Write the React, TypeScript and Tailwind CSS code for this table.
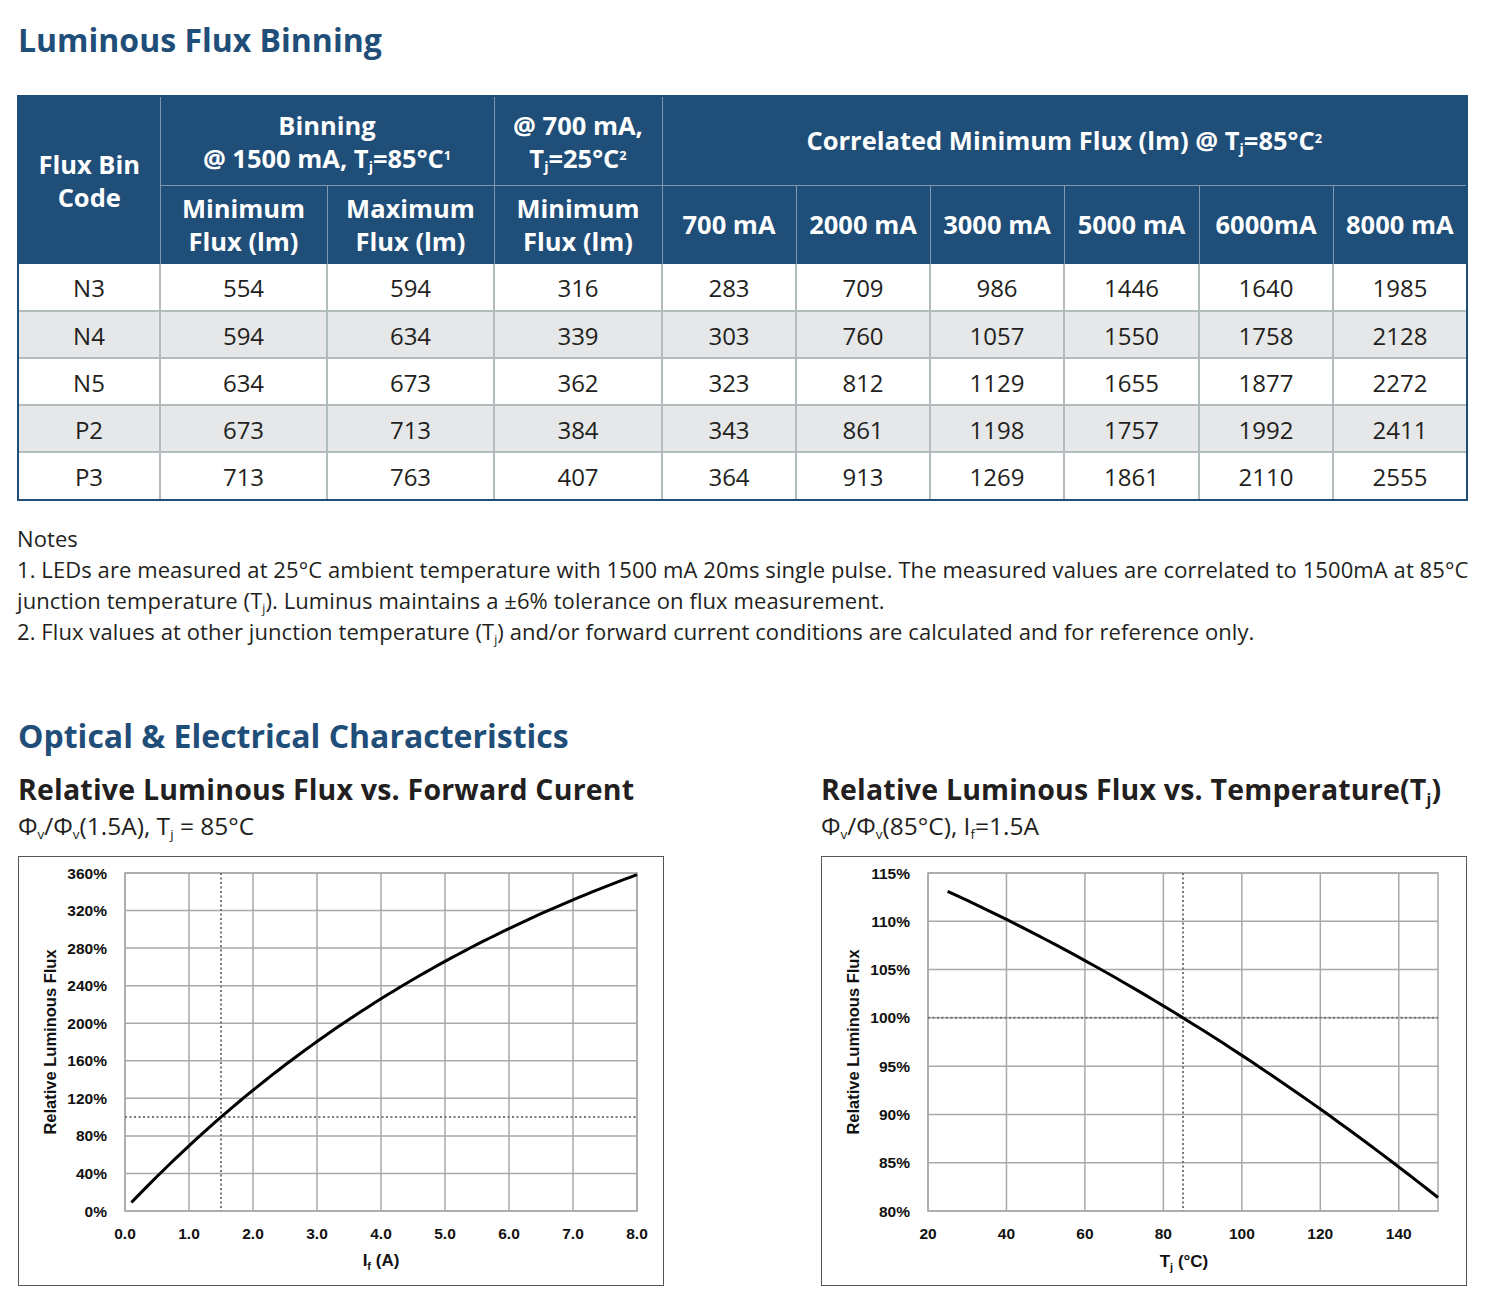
import React from "react";

const Sub = ({ children }: { children: React.ReactNode }) => (
  <span className="relative top-[0.3em] text-[0.55em] leading-none">{children}</span>
);

const Sup = ({ children }: { children: React.ReactNode }) => (
  <span className="relative -top-[0.6em] text-[0.5em] leading-none">{children}</span>
);

const widths = [141, 167, 167, 168, 134, 134, 134, 135, 134, 133];

const rows = [
  ["N3", "554", "594", "316", "283", "709", "986", "1446", "1640", "1985"],
  ["N4", "594", "634", "339", "303", "760", "1057", "1550", "1758", "2128"],
  ["N5", "634", "673", "362", "323", "812", "1129", "1655", "1877", "2272"],
  ["P2", "673", "713", "384", "343", "861", "1198", "1757", "1992", "2411"],
  ["P3", "713", "763", "407", "364", "913", "1269", "1861", "2110", "2555"],
];

const currents = ["700 mA", "2000 mA", "3000 mA", "5000 mA", "6000mA", "8000 mA"];

// flux vs current, fitted to the datasheet curve
const currentData: [number, number][] = [];
for (let x = 0.1; x <= 8.001; x += 0.1) {
  currentData.push([x, 9 + 546.5 * (Math.exp(-0.0132) - Math.exp(-0.132 * x))]);
}

// flux vs junction temperature
const tempData: [number, number][] = [];
for (let t = 25; t <= 150; t += 2.5) {
  const d = t - 85;
  tempData.push([t, 100 - 0.2509 * d - 0.000543 * d * d]);
}

const linePath = (pts: [number, number][]) =>
  pts.map((p, i) => `${i === 0 ? "M" : "L"}${p[0].toFixed(2)},${p[1].toFixed(2)}`).join(" ");

type ChartProps = {
  xMin: number;
  xMax: number;
  xTicks: number[];
  xFmt: (v: number) => string;
  yMin: number;
  yMax: number;
  yTicks: number[];
  right: number;
  data: [number, number][];
  dotX: number;
  dotY: number;
  xLabel: React.ReactNode;
};

const Chart = ({ xMin, xMax, xTicks, xFmt, yMin, yMax, yTicks, right, data, dotX, dotY, xLabel }: ChartProps) => {
  const left = 106;
  const top = 16;
  const bottom = 354;
  const sx = (v: number) => left + ((v - xMin) / (xMax - xMin)) * (right - left);
  const sy = (v: number) => bottom - ((v - yMin) / (yMax - yMin)) * (bottom - top);
  const pts = data.map(([x, y]) => [sx(x), sy(y)] as [number, number]);

  return (
    <div className="w-[646px] h-[430px] border-[1.5px] border-[#555]">
      <svg width="643" height="427" className="block font-['Liberation_Sans',Arial,sans-serif]">
        {yTicks.map((t) => (
          <line key={"h" + t} x1={left} x2={right} y1={sy(t)} y2={sy(t)} stroke="#a9a9a9" strokeWidth="1.5" />
        ))}
        {xTicks.map((t) => (
          <line key={"v" + t} x1={sx(t)} x2={sx(t)} y1={top} y2={bottom} stroke="#a9a9a9" strokeWidth="1.5" />
        ))}
        <rect x={left} y={top} width={right - left} height={bottom - top} fill="none" stroke="#a9a9a9" strokeWidth="1.5" />
        <line x1={sx(dotX)} x2={sx(dotX)} y1={top} y2={bottom} stroke="#777" strokeWidth="2" strokeDasharray="2 2.5" />
        <line x1={left} x2={right} y1={sy(dotY)} y2={sy(dotY)} stroke="#777" strokeWidth="2" strokeDasharray="2 2.5" />
        <path d={linePath(pts)} fill="none" stroke="#000" strokeWidth="3" strokeLinejoin="round" />

        {yTicks.map((t) => (
          <text key={"yl" + t} x={88} y={sy(t)} dy="0.36em" textAnchor="end" fontSize="15.5" fontWeight="700" fill="#111">
            {t}%
          </text>
        ))}
        {xTicks.map((t) => (
          <text key={"xl" + t} x={sx(t)} y={376} dy="0.36em" textAnchor="middle" fontSize="15.5" fontWeight="700" fill="#111">
            {xFmt(t)}
          </text>
        ))}
        <text
          x={31}
          y={185}
          dy="0.36em"
          textAnchor="middle"
          fontSize="16.5"
          fontWeight="700"
          fill="#111"
          transform="rotate(-90 31 185)"
        >
          Relative Luminous Flux
        </text>
        {xLabel}
      </svg>
    </div>
  );
};

export default function App() {
  return (
    <div className="w-[1504px] h-[1309px] bg-white px-[17px] pt-[18px] font-['Open_Sans',sans-serif] text-[#231f20]">
      <h1 className="text-[32px] font-bold leading-[44px] text-[#1f4e79] pl-[1px]">Luminous Flux Binning</h1>

      <div className="mt-[33px] w-[1451px] border-2 border-[#1f4e79]">
        <table className="table-fixed border-collapse w-[1447px]">
          <colgroup>
            {widths.map((w, i) => (
              <col key={i} style={{ width: w }} />
            ))}
          </colgroup>
          <thead className="bg-[#1f4e79] text-white text-[25.5px] font-bold leading-[33px]">
            <tr className="h-[88px]">
              <th rowSpan={2} className="border-r-[1.5px] border-[#7f98b0] font-bold">
                Flux Bin
                <br />
                Code
              </th>
              <th colSpan={2} className="border-r-[1.5px] border-b-[1.5px] border-[#7f98b0] pt-[2px]">
                Binning
                <br />@ 1500 mA, T<Sub>j</Sub>=85°C<Sup>1</Sup>
              </th>
              <th className="border-r-[1.5px] border-b-[1.5px] border-[#7f98b0] pt-[2px]">
                @ 700 mA,
                <br />T<Sub>j</Sub>=25°C<Sup>2</Sup>
              </th>
              <th colSpan={6} className="border-b-[1.5px] border-[#7f98b0]">
                Correlated Minimum Flux (lm) @ T<Sub>j</Sub>=85°C<Sup>2</Sup>
              </th>
            </tr>
            <tr className="h-[79px]">
              {["Minimum", "Maximum", "Minimum"].map((w, i) => (
                <th key={i} className="border-r-[1.5px] border-[#7f98b0]">
                  {w}
                  <br />
                  Flux (lm)
                </th>
              ))}
              {currents.map((c, i) => (
                <th key={c} className={i < 5 ? "border-r-[1.5px] border-[#7f98b0]" : ""}>
                  {c}
                </th>
              ))}
            </tr>
          </thead>
          <tbody className="text-[24px] leading-none">
            {rows.map((r, ri) => (
              <tr key={r[0]} className={`h-[47px] ${ri % 2 === 1 ? "bg-[#e6e7e8]" : "bg-white"}`}>
                {r.map((v, ci) => (
                  <td
                    key={ci}
                    className={`text-center pt-[2px] border-[#b3bcbc] ${ci < 9 ? "border-r-2" : ""} ${
                      ri < 4 ? "border-b-2" : ""
                    }`}
                  >
                    {v}
                  </td>
                ))}
              </tr>
            ))}
          </tbody>
        </table>
      </div>

      <div className="mt-[22px] text-[22px] leading-[31px] whitespace-nowrap tracking-[0.08px]">
        <div>Notes</div>
        <div>
          1. LEDs are measured at 25°C ambient temperature with 1500 mA 20ms single pulse. The measured values are
          correlated to 1500mA at 85°C
        </div>
        <div>
          junction temperature (T<Sub>j</Sub>). Luminus maintains a ±6% tolerance on flux measurement.
        </div>
        <div>
          2. Flux values at other junction temperature (T<Sub>j</Sub>) and/or forward current conditions are calculated
          and for reference only.
        </div>
      </div>

      <h2 className="mt-[67px] pl-[1px] text-[32px] font-bold leading-[44px] text-[#1f4e79]">
        Optical &amp; Electrical Characteristics
      </h2>

      <div className="mt-[14px] flex gap-[157px] pl-[1px]">
        <div className="w-[646px]">
          <h3 className="text-[28.5px] font-bold leading-[34px] tracking-[0.2px] whitespace-nowrap">
            Relative Luminous Flux vs. Forward Curent
          </h3>
          <div className="text-[24.5px] leading-[30px] mt-[5px] whitespace-nowrap">
            Φ<Sub>v</Sub>/Φ<Sub>v</Sub>(1.5A), T<Sub>j</Sub> = 85°C
          </div>
          <div className="mt-[15px]">
            <Chart
              xMin={0}
              xMax={8}
              xTicks={[0, 1, 2, 3, 4, 5, 6, 7, 8]}
              xFmt={(v) => v.toFixed(1)}
              yMin={0}
              yMax={360}
              yTicks={[0, 40, 80, 120, 160, 200, 240, 280, 320, 360]}
              right={618}
              data={currentData}
              dotX={1.5}
              dotY={100}
              xLabel={
                <text x={362} y={403} dy="0.36em" textAnchor="middle" fontSize="17" fontWeight="700" fill="#111">
                  I<tspan fontSize="11" dy="4">f</tspan>
                  <tspan dy="-4"> (A)</tspan>
                </text>
              }
            />
          </div>
        </div>

        <div className="w-[646px]">
          <h3 className="text-[28.5px] font-bold leading-[34px] tracking-[0.2px] whitespace-nowrap">
            Relative Luminous Flux vs. Temperature(T<Sub>j</Sub>)
          </h3>
          <div className="text-[24.5px] leading-[30px] mt-[5px] whitespace-nowrap">
            Φ<Sub>v</Sub>/Φ<Sub>v</Sub>(85°C), I<Sub>f</Sub>=1.5A
          </div>
          <div className="mt-[15px]">
            <Chart
              xMin={20}
              xMax={150}
              xTicks={[20, 40, 60, 80, 100, 120, 140]}
              xFmt={(v) => String(v)}
              yMin={80}
              yMax={115}
              yTicks={[80, 85, 90, 95, 100, 105, 110, 115]}
              right={616}
              data={tempData}
              dotX={85}
              dotY={100}
              xLabel={
                <text x={362} y={404} dy="0.36em" textAnchor="middle" fontSize="17" fontWeight="700" fill="#111">
                  T<tspan fontSize="11" dy="4">j</tspan>
                  <tspan dy="-4"> (°C)</tspan>
                </text>
              }
            />
          </div>
        </div>
      </div>
    </div>
  );
}
